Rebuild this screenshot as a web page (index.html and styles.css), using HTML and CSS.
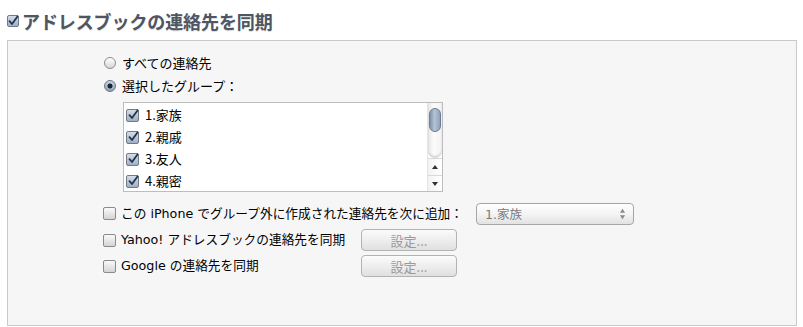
FILE: index.html
```html
<!DOCTYPE html>
<html lang="ja">
<head>
<meta charset="utf-8">
<link rel="stylesheet" href="styles.css">
</head>
<body>
<div class="title">
  <span class="cb cb-title checked"><svg viewBox="0 0 12 12"><path d="M2.5 6.2 L5 9 L10.5 1.5" /></svg></span>
  <span class="title-text">アドレスブックの連絡先を同期</span>
</div>
<div class="panel">
  <div class="radio-row">
    <span class="radio"></span><span class="label">すべての連絡先</span>
  </div>
  <div class="radio-row">
    <span class="radio selected"></span><span class="label">選択したグループ：</span>
  </div>
  <div class="listbox">
    <div class="list-items">
      <div class="item"><span class="cb checked"><svg viewBox="0 0 12 12"><path d="M2.5 6.2 L5 9 L10.5 1.5" /></svg></span><span class="label">1.家族</span></div>
      <div class="item"><span class="cb checked"><svg viewBox="0 0 12 12"><path d="M2.5 6.2 L5 9 L10.5 1.5" /></svg></span><span class="label">2.親戚</span></div>
      <div class="item"><span class="cb checked"><svg viewBox="0 0 12 12"><path d="M2.5 6.2 L5 9 L10.5 1.5" /></svg></span><span class="label">3.友人</span></div>
      <div class="item"><span class="cb checked"><svg viewBox="0 0 12 12"><path d="M2.5 6.2 L5 9 L10.5 1.5" /></svg></span><span class="label">4.親密</span></div>
    </div>
    <div class="scrollbar">
      <div class="track"><div class="thumb"></div></div>
      <div class="arrow up"><svg viewBox="0 0 8 6"><path d="M4 1 L7 5 L1 5 Z"/></svg></div>
      <div class="arrow down"><svg viewBox="0 0 8 6"><path d="M1 1 L7 1 L4 5 Z"/></svg></div>
    </div>
  </div>
  <div class="opt-row first">
    <span class="opt-label wide"><span class="cb"></span><span class="label">この iPhone でグループ外に作成された連絡先を次に追加：</span></span>
    <div class="select"><span class="select-text">1.家族</span><svg class="stepper" viewBox="0 0 8 14"><path d="M4 1 L7 5.5 L1 5.5 Z M1 8.5 L7 8.5 L4 13 Z"/></svg></div>
  </div>
  <div class="opt-row">
    <span class="opt-label"><span class="cb"></span><span class="label">Yahoo! アドレスブックの連絡先を同期</span></span>
    <div class="button">設定...</div>
  </div>
  <div class="opt-row">
    <span class="opt-label"><span class="cb"></span><span class="label">Google の連絡先を同期</span></span>
    <div class="button">設定...</div>
  </div>
</div>
</body>
</html>
```

FILE: styles.css
```css
* { box-sizing: border-box; }
html, body { margin: 0; padding: 0; background: #ffffff; }
body {
  width: 803px;
  height: 327px;
  overflow: hidden;
  font-family: "Lucida Grande", "DejaVu Sans", "Noto Sans CJK JP", sans-serif;
  font-size: 13px;
  color: #000;
}
.title {
  height: 40px;
  display: flex;
  align-items: center;
  padding-left: 7px;
  padding-top: 1px;
}
.title-text {
  font-family: "Noto Sans CJK JP", sans-serif;
  font-weight: bold;
  font-size: 18px;
  color: #4f5662;
  margin-left: 3px;
  letter-spacing: -0.1px;
  text-shadow: 0 1px 0 #e0e0e0;
}
.panel {
  margin: 0 6px 0 7px;
  height: 286px;
  border: 1px solid #c9c9c9;
  background: #f6f6f6;
  padding: 13px 0 0 95px;
}
.label {
  font-family: "Noto Sans CJK JP", sans-serif;
  font-size: 13px;
  line-height: 18px;
  white-space: nowrap;
}
.opt-label .label { font-family: "DejaVu Sans", "Noto Sans CJK JP", sans-serif; font-size: 12.7px; letter-spacing: 0px; }
.radio-row {
  height: 18px;
  display: flex;
  align-items: center;
  margin-bottom: 5px;
}
.radio {
  width: 12px;
  height: 12px;
  border-radius: 50%;
  border: 1px solid #8c8c8c;
  background: linear-gradient(#ffffff, #d6d6d6);
  margin: 0 6px 0 1px;
  position: relative;
  flex: none;
}
.radio.selected {
  background: radial-gradient(circle, #1b2533 0 2.2px, transparent 2.8px), linear-gradient(#c6d2e0, #8ea1b8);
  border-color: #6c7684;
}
.cb {
  width: 13px;
  height: 13px;
  border: 1px solid #8a8a8a;
  border-radius: 2px;
  background: linear-gradient(#fafafa, #d4d4d4);
  flex: none;
  display: inline-flex;
  align-items: center;
  justify-content: center;
}
.cb svg { width: 12px; height: 12px; overflow: visible; }
.cb svg path { fill: none; stroke: #1f3350; stroke-width: 1.8; stroke-linecap: round; stroke-linejoin: round; }
.cb.checked { background: linear-gradient(#d4dde8, #a0afc1); border-color: #707a88; }
.cb-title { width: 12px; height: 12px; }
.listbox {
  margin: 7px 0 0 20px;
  width: 320px;
  height: 90px;
  border: 1px solid #bdbdbd;
  background: #ffffff;
  display: flex;
}
.list-items {
  flex: 1;
  padding: 1px 0 0 2px;
}
.item {
  height: 22px;
  display: flex;
  align-items: center;
}
.item .cb { margin-right: 6px; }
.scrollbar {
  width: 15px;
  display: flex;
  flex-direction: column;
  border-left: 1px solid #e4e4e4;
}
.track {
  height: 55px;
  background: linear-gradient(90deg, #e6e6e6, #fbfbfb 40%, #f4f4f4);
  border-radius: 0 0 7px 7px;
  box-shadow: inset 0 -2px 2px #d4d4d4;
  padding: 5px 1px 0 1px;
}
.thumb {
  height: 24px;
  border-radius: 6px;
  border: 1px solid #6c7d95;
  background: linear-gradient(90deg, #8193ab, #b4c3d6 45%, #90a2bb);
}
.arrow {
  height: 16px;
  display: flex;
  align-items: center;
  justify-content: center;
  background: linear-gradient(90deg, #f2f2f2, #ffffff);
}
.arrow.up { border-top: 1px solid #d9d9d9; height: 17px; }
.arrow.down { border-top: 1px solid #d9d9d9; }
.arrow svg { width: 8px; height: 6px; }
.arrow svg path { fill: #303030; }
.opt-row {
  display: flex;
  align-items: center;
  height: 22px;
  margin-top: 4px;
}
.opt-row.first { margin-top: 10px; height: 23px; }
.opt-label {
  display: flex;
  align-items: center;
  width: 258px;
  flex: none;
}
.opt-label.wide { width: 373px; }
.opt-label .cb { margin-right: 5px; }
.select {
  width: 158px;
  height: 22px;
  border: 1px solid #a6a6a6;
  border-radius: 4px;
  background: linear-gradient(#ffffff, #f4f4f4 50%, #e2e2e2);
  display: flex;
  align-items: center;
  padding: 0 7px 0 8px;
}
.select-text {
  flex: 1;
  font-family: "DejaVu Sans", "Noto Sans CJK JP", sans-serif;
  font-size: 12.5px;
  color: #7a7a7a;
}
.stepper { width: 7px; height: 12px; }
.stepper path { fill: #8a8a8a; }
.button {
  width: 96px;
  height: 22px;
  border: 1px solid #b3b3b3;
  border-radius: 4px;
  background: linear-gradient(#fbfbfb, #eeeeee 50%, #e0e0e0);
  display: flex;
  align-items: center;
  justify-content: center;
  font-family: "Noto Sans CJK JP", sans-serif;
  font-size: 13px;
  color: #9a9a9a;
}
```
